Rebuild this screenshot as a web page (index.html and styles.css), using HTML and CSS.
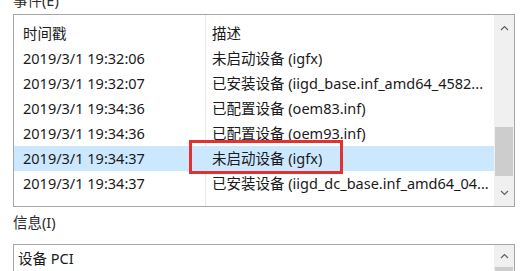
FILE: index.html
```html
<!DOCTYPE html>
<html lang="zh-CN">
<head>
<meta charset="UTF-8">
<meta name="viewport" content="width=device-width, initial-scale=1.0">
<title>设备属性 - 事件</title>
<link rel="stylesheet" href="styles.css">
</head>
<body>
<div class="page">
    <div class="group-label top-label">事件(E)</div>

    <div class="listbox">
        <div class="list-body">
            <div class="row head">
                <span class="c1">时间戳</span>
                <span class="c2">描述</span>
            </div>
            <div class="row">
                <span class="c1">2019/3/1 19:32:06</span>
                <span class="c2">未启动设备 (igfx)</span>
            </div>
            <div class="row">
                <span class="c1">2019/3/1 19:32:07</span>
                <span class="c2">已安装设备 (iigd_base.inf_amd64_4582...</span>
            </div>
            <div class="row">
                <span class="c1">2019/3/1 19:34:36</span>
                <span class="c2">已配置设备 (oem83.inf)</span>
            </div>
            <div class="row">
                <span class="c1">2019/3/1 19:34:36</span>
                <span class="c2">已配置设备 (oem93.inf)</span>
            </div>
            <div class="row selected">
                <span class="c1">2019/3/1 19:34:37</span>
                <span class="c2">未启动设备 (igfx)</span>
                <!-- red box drawn over the screenshot -->
                <span class="mark"></span>
            </div>
            <div class="row">
                <span class="c1">2019/3/1 19:34:37</span>
                <span class="c2">已安装设备 (iigd_dc_base.inf_amd64_04...</span>
            </div>
        </div>
        <div class="vscroll">
            <span class="arrow">
                <svg width="9" height="6" viewBox="0 0 9 6"><polyline points="1,5 4.5,1.5 8,5" fill="none" stroke="#606060" stroke-width="1.2"/></svg>
            </span>
            <span class="track"><span class="thumb"></span></span>
            <span class="arrow">
                <svg width="9" height="6" viewBox="0 0 9 6"><polyline points="1,1 4.5,4.5 8,1" fill="none" stroke="#606060" stroke-width="1.2"/></svg>
            </span>
        </div>
    </div>

    <div class="group-label info-label">信息(I)</div>

    <div class="infobox">
        <div class="info-text">
            <div>设备 PCI</div>
            <div>PCI\VEN_8086&amp;DEV_3E92&amp;SUBSYS_86941043&amp;REV_00\3&amp;11583659&amp;0&amp;10</div>
        </div>
        <div class="vscroll small">
            <span class="arrow">
                <svg width="9" height="6" viewBox="0 0 9 6"><polyline points="1,5 4.5,1.5 8,5" fill="none" stroke="#606060" stroke-width="1.2"/></svg>
            </span>
            <span class="track"><span class="thumb"></span></span>
        </div>
    </div>
</div>
</body>
</html>
```

FILE: styles.css
```css
/* Windows device properties dialog, events tab */
body {
    margin: 0;
    background-color: #ffffff;
    font-family: "Noto Sans", "Noto Sans CJK SC", sans-serif;
    font-size: 14.5px;
    color: #1a1a1a;
    overflow: hidden;
}
.page {
    padding-left: 13px;
    width: 502px;
}
.group-label {
    line-height: 20px;
    color: #2b2b2b;
}
.top-label {
    margin-top: -10px;
    margin-bottom: 4px;
}
.info-label {
    margin-top: 5px;
    margin-bottom: 12px;
}

/* event list */
.listbox {
    display: grid;
    grid-template-columns: 1fr 20px;
    height: 193px;
    box-sizing: border-box;
    border: 1px solid #a6a6a6;
}
.list-body {
    padding-top: 6px;
    /* column divider */
    background: linear-gradient(to right, transparent 191px, #e8e8e8 191px, #e8e8e8 192px, transparent 192px);
}
.row {
    position: relative;
    display: flex;
    height: 25px;
    line-height: 25px;
    white-space: nowrap;
}
.row .c1 {
    width: 183px;
    padding-left: 9px;
    flex-shrink: 0;
}
.row .c2 {
    padding-left: 6px;
    overflow: hidden;
}
.row.selected {
    background-color: #cce8ff;
}
.mark {
    position: absolute;
    left: 175px;
    top: -6px;
    width: 148px;
    height: 28px;
    border: 3px solid #e2312f;
}

/* scrollbar */
.vscroll {
    display: flex;
    flex-direction: column;
    background-color: #f0f0f0;
}
.vscroll .arrow {
    display: flex;
    align-items: center;
    justify-content: center;
    height: 26px;
}
.vscroll .track {
    flex: 1;
    display: flex;
    flex-direction: column;
    justify-content: flex-end;
}
.vscroll .thumb {
    height: 49px;
    margin: 0 1px 4px;
    background-color: #cdcdcd;
}

/* info box */
.infobox {
    display: grid;
    grid-template-columns: 1fr 20px;
    height: 60px;
    border: 1px solid #a6a6a6;
}
.info-text {
    padding: 3px 0 0 4px;
    line-height: 20px;
    white-space: nowrap;
    overflow: hidden;
}
.vscroll.small .arrow {
    height: 22px;
}
.vscroll.small .track {
    justify-content: flex-start;
}
.vscroll.small .thumb {
    height: 30px;
    margin: 0 1px;
}
```
